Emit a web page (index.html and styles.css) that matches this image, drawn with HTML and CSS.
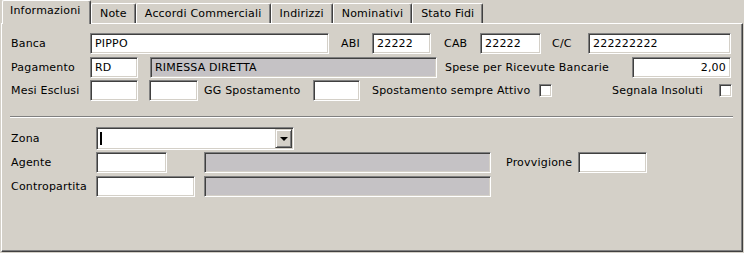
FILE: index.html
```html
<!DOCTYPE html>
<html lang="it">
<head>
    <meta charset="UTF-8">
    <title>Anagrafica Cliente</title>
    <link rel="stylesheet" href="styles.css">
</head>
<body>
    <!-- Tab strip -->
    <div class="tabs">
        <div class="tab active">Informazioni</div>
        <div class="tab">Note</div>
        <div class="tab">Accordi Commerciali</div>
        <div class="tab">Indirizzi</div>
        <div class="tab">Nominativi</div>
        <div class="tab">Stato Fidi</div>
    </div>

    <!-- Tab page: Informazioni -->
    <div class="panel">
        <div class="row">
            <span class="lbl lbl-main">Banca</span>
            <div class="field f-banca">PIPPO</div>
            <span class="lbl lbl-abi">ABI</span>
            <div class="field f-abi">22222</div>
            <span class="lbl lbl-cab">CAB</span>
            <div class="field f-cab">22222</div>
            <span class="lbl lbl-cc">C/C</span>
            <div class="field f-cc">222222222</div>
        </div>

        <div class="row row-2">
            <span class="lbl lbl-main">Pagamento</span>
            <div class="field f-small">RD</div>
            <div class="field readonly f-desc">RIMESSA DIRETTA</div>
            <span class="lbl lbl-spese">Spese per Ricevute Bancarie</span>
            <div class="field f-spese">2,00</div>
        </div>

        <div class="row row-3">
            <span class="lbl lbl-main">Mesi Esclusi</span>
            <div class="field f-small"></div>
            <div class="field f-mesi2"></div>
            <span class="lbl lbl-gg">GG Spostamento</span>
            <div class="field f-gg"></div>
            <span class="lbl lbl-spost">Spostamento sempre Attivo</span>
            <div class="check"></div>
            <span class="lbl lbl-ins">Segnala Insoluti</span>
            <div class="check"></div>
        </div>

        <div class="separator"></div>

        <div class="row row-zona">
            <span class="lbl lbl-sec">Zona</span>
            <div class="combo">
                <span class="caret"></span>
                <div class="combo-btn"><span class="arrow"></span></div>
            </div>
        </div>

        <div class="row row-agente">
            <span class="lbl lbl-sec">Agente</span>
            <div class="field f-agente"></div>
            <div class="field readonly f-desc2 ml-agente"></div>
            <span class="lbl lbl-prov">Provvigione</span>
            <div class="field f-prov"></div>
        </div>

        <div class="row row-contro">
            <span class="lbl lbl-sec">Contropartita</span>
            <div class="field f-contro"></div>
            <div class="field readonly f-desc2 ml-contro"></div>
        </div>
    </div>
</body>
</html>
```

FILE: styles.css
```css
/* Basic Styling */
* {
    box-sizing: border-box;
    margin: 0;
    padding: 0;
}
body {
    font-family: "DejaVu Sans", Verdana, sans-serif;
    font-size: 11px;
    letter-spacing: 0.2px;
    color: #000;
    background-color: #d4d0c8;
    width: 744px;
    height: 253px;
    overflow: hidden;
}

/* Tab strip */
.tabs {
    display: flex;
    align-items: flex-end;
    height: 23px;
    padding-left: 2px;
}

.tab {
    height: 20px;
    line-height: 19px;
    padding: 0 8px 0 8px;
    border-top: 1px solid #fff;
    border-left: 1px solid #fff;
    border-right: 1px solid #404040;
    border-radius: 2px 2px 0 0;
    box-shadow: inset -1px 0 #808080;
    white-space: nowrap;
}

.tab.active {
    position: relative;
    z-index: 1;
    height: 24px;
    line-height: 20px;
    margin-bottom: -1px;
    width: 89px;
    padding-left: 7px;
    background-color: #d4d0c8;
}

/* Tab page */
.panel {
    margin: 0 1px;
    height: 229px;
    padding: 9px 0 0 9px;
    border-top: 1px solid #fff;
    border-left: 1px solid #fff;
    border-right: 1px solid #404040;
    border-bottom: 1px solid #404040;
    box-shadow: inset -1px -1px #808080;
}

.row {
    display: flex;
    align-items: center;
    height: 21px;
}

.row-2 { margin-top: 3px; }
.row-3 { margin-top: 2px; }
.row-zona { height: 23px; margin-top: 9px; }
.row-agente { margin-top: 2px; }
.row-contro { margin-top: 3px; }

/* Labels */
.lbl {
    flex: none;
    white-space: nowrap;
}

.lbl-main { width: 79px; }
.lbl-abi { width: 43px; padding-left: 12px; }
.lbl-cab { width: 49px; padding-left: 13px; }
.lbl-cc { width: 47px; padding-left: 11px; }
.lbl-spese { width: 195px; padding-left: 8px; }
.lbl-gg { width: 115px; padding-left: 6px; }
.lbl-spost { width: 179px; padding-left: 12px; }
.lbl-ins { width: 167px; padding-left: 60px; }
.lbl-sec { width: 85px; }
.lbl-prov { width: 87px; padding-left: 15px; }

/* Sunken edit fields */
.field {
    flex: none;
    height: 21px;
    line-height: 19px;
    padding: 0 4px;
    background-color: #fff;
    border: 1px solid;
    border-color: #808080 #fff #fff #808080;
    box-shadow: inset 1px 1px #404040, inset -1px -1px #d4d0c8;
    white-space: nowrap;
    overflow: hidden;
}

.field.readonly {
    background-color: #c5c2c5;
}

.f-banca { width: 239px; }
.f-abi { width: 59px; }
.f-cab { width: 61px; }
.f-cc { width: 143px; }
.f-small { width: 48px; }
.f-desc { width: 287px; margin-left: 12px; }
.f-spese { width: 99px; text-align: right; }
.f-mesi2 { width: 49px; margin-left: 11px; }
.f-gg { width: 47px; }
.f-agente { width: 71px; }
.f-desc2 { width: 287px; }
.ml-agente { margin-left: 37px; }
.ml-contro { margin-left: 9px; }
.f-prov { width: 69px; }
.f-contro { width: 99px; }

/* Checkbox */
.check {
    flex: none;
    width: 13px;
    height: 13px;
    background-color: #fff;
    border: 1px solid;
    border-color: #808080 #fff #fff #808080;
    box-shadow: inset 1px 1px #404040, inset -1px -1px #d4d0c8;
}

/* Separator line */
.separator {
    width: 723px;
    height: 2px;
    margin: 15px 0 0 -1px;
    border-top: 1px solid #808080;
    border-bottom: 1px solid #fff;
}

/* Combo box */
.combo {
    flex: none;
    display: flex;
    align-items: center;
    justify-content: space-between;
    width: 198px;
    height: 23px;
    padding: 0 1px 0 3px;
    background-color: #fff;
    border: 1px solid;
    border-color: #808080 #fff #fff #808080;
    box-shadow: inset 1px 1px #404040, inset -1px -1px #d4d0c8;
}

.caret {
    width: 2px;
    height: 13px;
    background-color: #000;
}

.combo-btn {
    display: flex;
    align-items: center;
    justify-content: center;
    width: 17px;
    height: 19px;
    background-color: #d4d0c8;
    border: 1px solid;
    border-color: #d4d0c8 #404040 #404040 #d4d0c8;
    box-shadow: inset 1px 1px #fff, inset -1px -1px #808080;
}

.arrow {
    width: 0;
    height: 0;
    border-left: 4px solid transparent;
    border-right: 4px solid transparent;
    border-top: 4px solid #000;
}
```
